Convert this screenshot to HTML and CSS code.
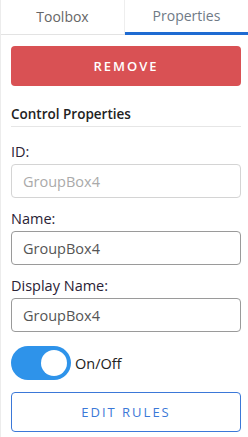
FILE: index.html
```html
<!DOCTYPE html>
<html lang="en">
<head>
    <meta charset="UTF-8">
    <title>Properties</title>
    <link rel="stylesheet" href="styles.css">
</head>
<body>
    <div class="panel">
        <!-- Tabs -->
        <div class="tabs">
            <div class="tab">Toolbox</div>
            <div class="tab active">Properties</div>
        </div>

        <div class="content">
            <button class="btn btn-remove">REMOVE</button>

            <h3 class="section-title">Control Properties</h3>

            <label class="field-label first">ID:</label>
            <input class="field disabled" type="text" value="GroupBox4" disabled>

            <label class="field-label">Name:</label>
            <input class="field" type="text" value="GroupBox4">

            <label class="field-label">Display Name:</label>
            <input class="field" type="text" value="GroupBox4">

            <div class="toggle-row">
                <span class="toggle"><span class="knob"></span></span>
                <span class="toggle-label">On/Off</span>
            </div>

            <button class="btn btn-rules">EDIT RULES</button>
        </div>
    </div>
</body>
</html>
```

FILE: styles.css
```css
/* Page */
body {
    margin: 0;
    font-family: 'Open Sans', sans-serif;
    background: #fff;
    color: #333;
}

.panel {
    width: 248px;
    height: 437px;
    box-sizing: border-box;
    border-left: 1px solid #ececec;
}

/* Tabs */
.tabs {
    display: flex;
    height: 35px;
    border-bottom: 1px solid #e3e3e3;
    box-sizing: border-box;
}

.tab {
    flex: 1;
    text-align: center;
    font-size: 14px;
    line-height: 33px;
    color: #666;
    box-sizing: border-box;
}

.tab:first-child {
    border-right: 1px solid #eee;
}

.tab.active {
    border-bottom: 3px solid #1e6bd2;
    color: #6f7a86;
    line-height: 32px;
    margin-bottom: -1px;
}

/* Content */
.content {
    padding: 11px 7px 0 10px;
    display: flex;
    flex-direction: column;
}

.btn {
    height: 40px;
    border-radius: 4px;
    font-family: 'Open Sans', sans-serif;
    font-size: 13px;
    letter-spacing: 2px;
    cursor: pointer;
}

.btn-remove {
    background: #d95154;
    color: #fff;
    border: none;
    font-weight: 600;
}

.section-title {
    margin: 18px 0 0;
    padding-bottom: 2px;
    font-size: 13.5px;
    line-height: 20px;
    font-weight: 600;
    color: #222;
    border-bottom: 1px solid #e6e6e6;
}

.field-label {
    margin: 11px 0 2px;
    font-size: 14.5px;
    line-height: 20px;
    color: #2a2235;
}

.field-label.first {
    margin-top: 15px;
}

.field {
    height: 34px;
    padding: 0 11px;
    border: 1px solid #9a9a9a;
    border-radius: 4px;
    font-family: 'Open Sans', sans-serif;
    font-size: 14.5px;
    color: #555;
    background: #fff;
    box-sizing: border-box;
}

.field.disabled {
    border-color: #d4d4d4;
    color: #aaa;
}

/* Toggle */
.toggle-row {
    display: flex;
    align-items: center;
    margin-top: 14px;
    gap: 4px;
}

.toggle {
    width: 60px;
    height: 34px;
    border-radius: 17px;
    background: #2e93ea;
    display: flex;
    align-items: center;
    justify-content: flex-end;
    padding-right: 4px;
    box-sizing: border-box;
}

.knob {
    width: 26px;
    height: 26px;
    border-radius: 50%;
    background: #fff;
}

.toggle-label {
    font-size: 14.5px;
    color: #222;
}

.btn-rules {
    margin-top: 12px;
    background: #fff;
    color: #3b78d8;
    border: 1px solid #3b78d8;
    font-weight: 400;
}
```
